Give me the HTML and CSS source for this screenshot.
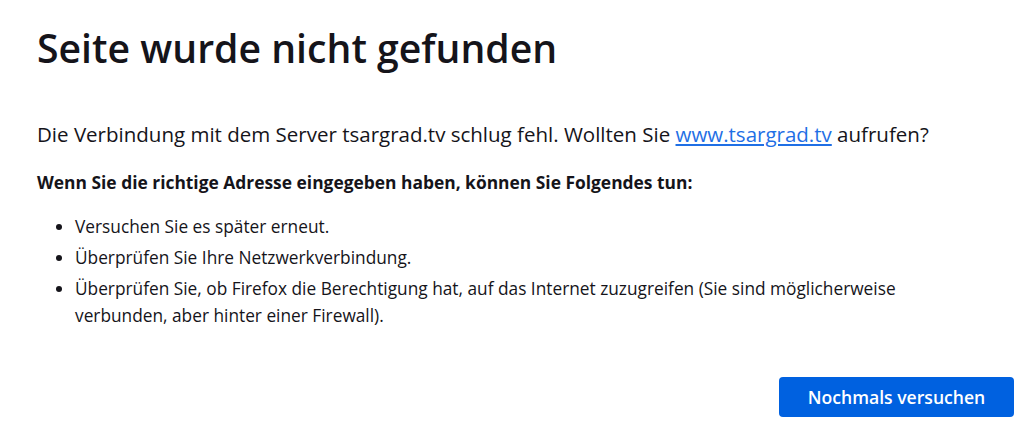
FILE: index.html
```html
<!DOCTYPE html>
<html lang="de">
<head>
  <meta charset="utf-8">
  <title>Seite wurde nicht gefunden</title>
  <link rel="stylesheet" href="styles.css">
</head>
<body>
<div class="container">
  <h1 class="title">Seite wurde nicht gefunden</h1>
  <p class="desc">Die Verbindung mit dem Server tsargrad.tv schlug fehl. Wollten Sie <a href="#">www.tsargrad.tv</a> aufrufen?</p>
  <p class="hint">Wenn Sie die richtige Adresse eingegeben haben, können Sie Folgendes tun:</p>
  <ul class="tips">
    <li>Versuchen Sie es später erneut.</li>
    <li>Überprüfen Sie Ihre Netzwerkverbindung.</li>
    <li>Überprüfen Sie, ob Firefox die Berechtigung hat, auf das Internet zuzugreifen (Sie sind möglicherweise verbunden, aber hinter einer Firewall).</li>
  </ul>
  <div class="actions">
    <button class="primary">Nochmals versuchen</button>
  </div>
</div>
</body>
</html>
```

FILE: styles.css
```css
body {
  margin: 0;
  background: #fff;
  color: #15141a;
  font-family: "Open Sans", "Noto Sans", sans-serif;
}
.container {
  padding: 20px 10px 0 37px;
}
.title {
  margin: 0;
  font-size: 39.2px;
  font-weight: 600;
  line-height: 56px;
}
.desc {
  margin: 44px 0 0 0;
  font-size: 20.5px;
  line-height: 28px;
}
.desc a {
  color: #1f6fe5;
}
.hint {
  margin: 21px 0 0 0;
  font-size: 17.4px;
  font-weight: 700;
  line-height: 26px;
}
.tips {
  max-width: 880px;
  margin: 18px 0 0 0;
  padding-left: 38px;
  font-size: 17.3px;
  line-height: 27px;
}
.tips li {
  margin-bottom: 4px;
}
.actions {
  display: flex;
  justify-content: flex-end;
  margin-top: 48px;
}
.primary {
  width: 235px;
  height: 40px;
  border: none;
  border-radius: 4px;
  background: #0061e0;
  color: #fff;
  font-family: inherit;
  font-size: 17.6px;
  font-weight: 600;
}
```
